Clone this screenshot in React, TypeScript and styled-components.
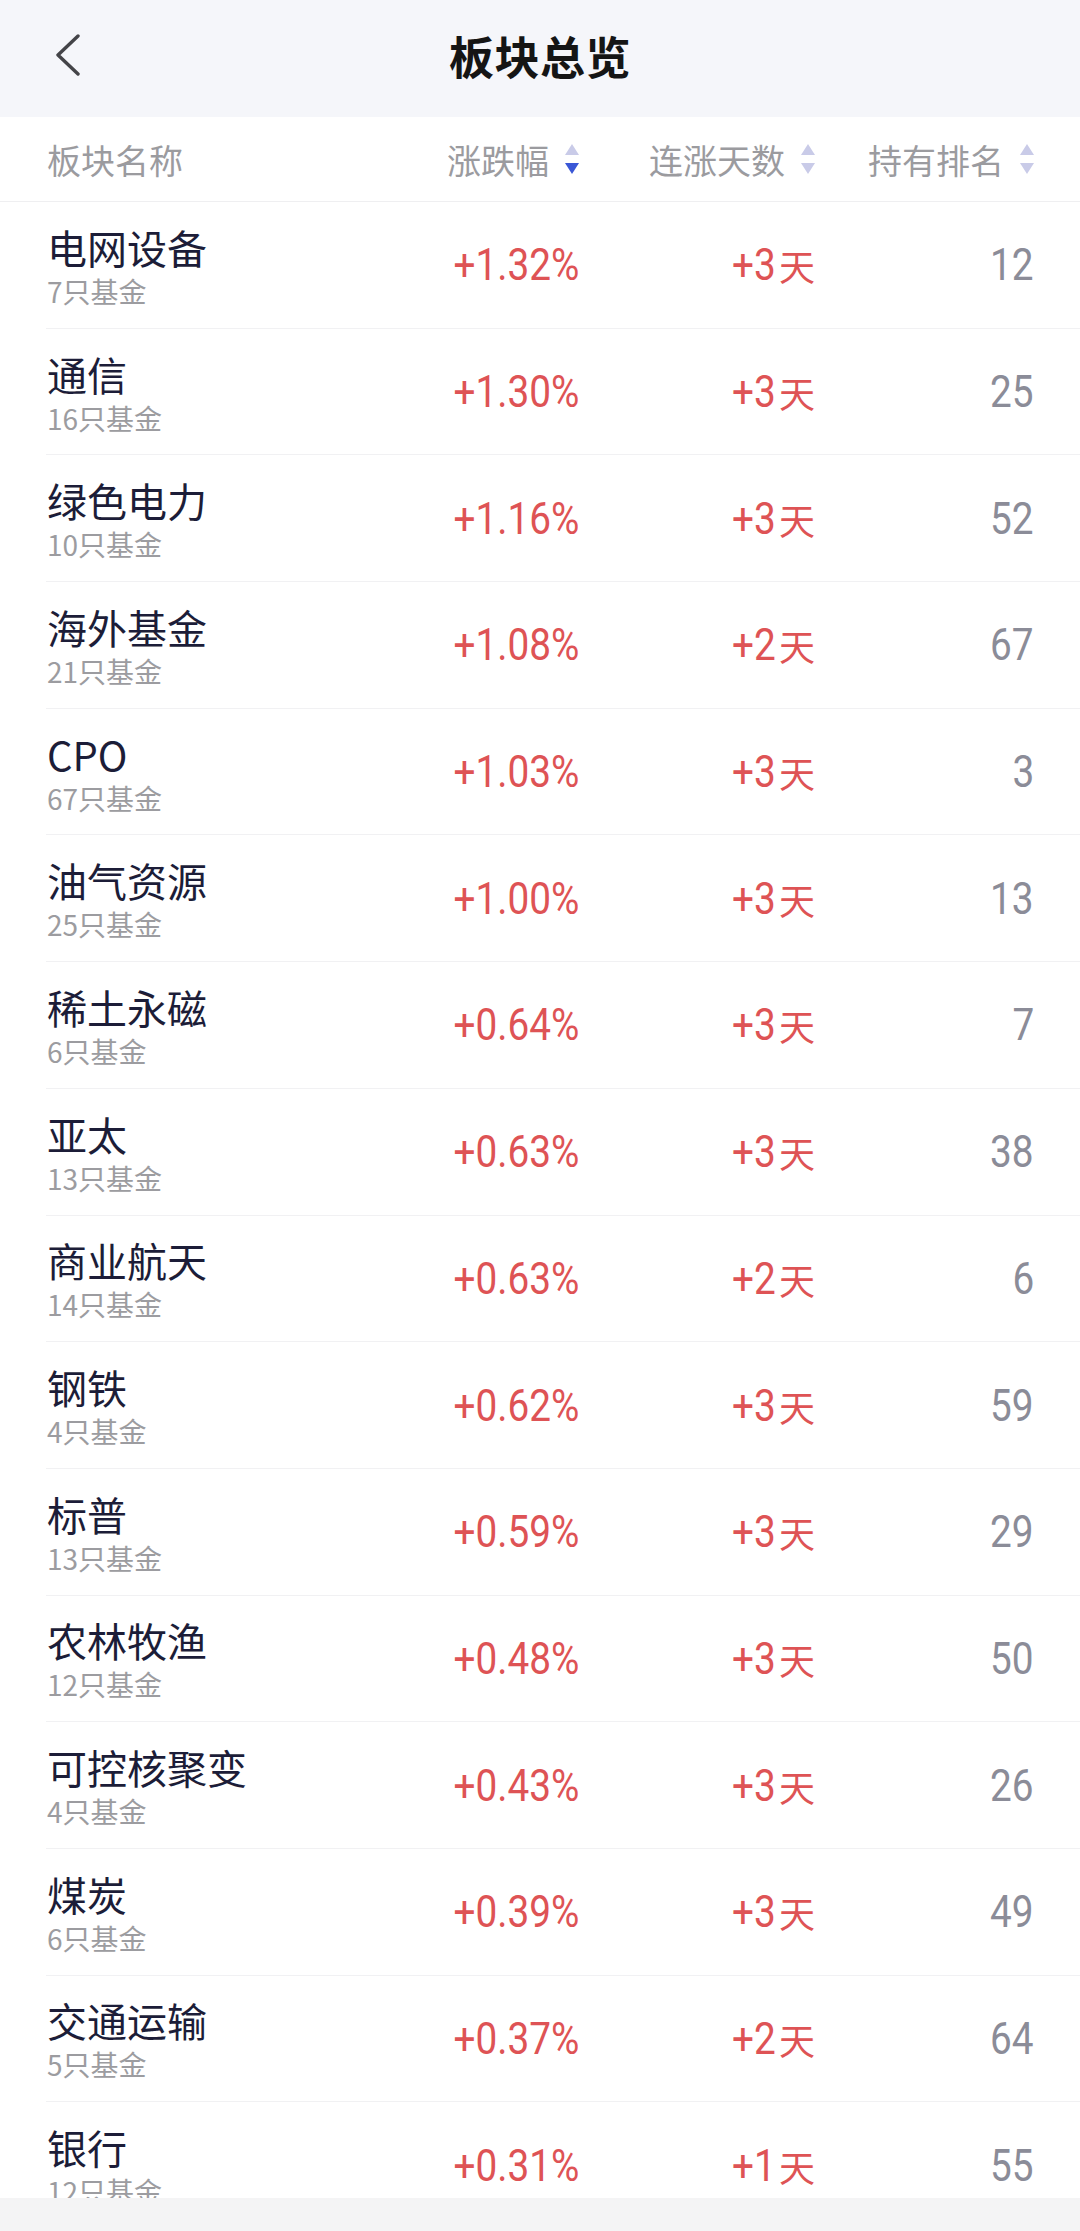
import React from "react";
import styled, { createGlobalStyle } from "styled-components";

const GlobalStyle = createGlobalStyle`
  html, body { margin: 0; padding: 0; background: #ffffff; }
  body { font-family: "Noto Sans CJK SC", "Noto Sans", sans-serif; }
  * { box-sizing: border-box; }
`;

const Page = styled.div`
  height: 100vh;
  display: flex;
  flex-direction: column;
  background: #ffffff;
  overflow: hidden;
`;

const TopBar = styled.header`
  flex: 0 0 117px;
  background: #f5f6fa;
  display: grid;
  grid-template-columns: 120px 1fr 120px;
  align-items: center;
  padding-bottom: 7px;
`;

const BackButton = styled.button`
  border: none;
  background: transparent;
  padding: 0 0 0 54px;
  display: flex;
  align-items: center;
  height: 60px;
  cursor: pointer;
`;

const Title = styled.h1`
  margin: 0;
  text-align: center;
  font-family: "Noto Sans CJK SC", sans-serif;
  font-size: 45px;
  font-weight: 700;
  color: #151515;
  letter-spacing: 0.5px;
`;

const Grid = styled.div`
  display: grid;
  grid-template-columns: 1fr 240px 236px 219px;
  align-items: center;
  padding: 0 46px 0 47px;
`;

const HeadRow = styled(Grid)`
  flex: 0 0 85px;
  border-bottom: 1px solid #efeff1;
`;

const HeadCell = styled.div<{ $right?: boolean }>`
  display: flex;
  align-items: center;
  justify-content: ${(p) => (p.$right ? "flex-end" : "flex-start")};
  gap: 16px;
  font-size: 34px;
  color: #9b9b9f;
  font-family: "Noto Sans CJK SC", sans-serif;
`;

const SortIcon = styled.span`
  display: inline-flex;
  flex-direction: column;
  gap: 8px;
  width: 14px;
`;

const Tri = styled.span<{ $down?: boolean; $active?: boolean }>`
  width: 0;
  height: 0;
  border-left: 7px solid transparent;
  border-right: 7px solid transparent;
  ${(p) =>
    p.$down
      ? `border-top: 11px solid ${p.$active ? "#3a57d6" : "#c9cbe8"};`
      : `border-bottom: 11px solid ${p.$active ? "#3a57d6" : "#c9cbe8"};`}
`;

const List = styled.div`
  flex: 1 1 auto;
  overflow: hidden;
`;

const Row = styled(Grid)`
  height: 126.7px;
  position: relative;
  &::after {
    content: "";
    position: absolute;
    left: 46px;
    right: 0;
    bottom: 0;
    height: 1px;
    background: #f1f1f3;
  }
`;

const NameCell = styled.div`
  display: flex;
  flex-direction: column;
  justify-content: center;
`;

const Name = styled.div`
  font-size: 40px;
  line-height: 48px;
  color: #1c1d38;
  font-family: "Noto Sans CJK SC", sans-serif;
  white-space: nowrap;
`;

const Sub = styled.div`
  margin-top: 3px;
  font-size: 28px;
  line-height: 34px;
  color: #9c9ca0;
  font-family: "Noto Sans CJK SC", sans-serif;
  white-space: nowrap;
`;

const Value = styled.div<{ $tone: "up" | "muted" }>`
  display: flex;
  justify-content: flex-end;
  align-items: center;
  color: ${(p) => (p.$tone === "up" ? "#de5355" : "#8b8c98")};
  white-space: nowrap;
`;

const Num = styled.span`
  display: inline-block;
  font-family: Roboto, "Liberation Sans", sans-serif;
  font-size: 45px;
  line-height: 48px;
  transform: scaleX(0.86);
  transform-origin: right center;
`;

const Unit = styled.span`
  font-family: "Noto Sans CJK SC", sans-serif;
  font-size: 36px;
  line-height: 48px;
  margin-left: 3px;
`;

const BottomBar = styled.div`
  flex: 0 0 33px;
  background: #f4f4f5;
`;

type Item = { name: string; count: number; change: string; days: number; rank: number };

const items: Item[] = [
  { name: "电网设备", count: 7, change: "+1.32%", days: 3, rank: 12 },
  { name: "通信", count: 16, change: "+1.30%", days: 3, rank: 25 },
  { name: "绿色电力", count: 10, change: "+1.16%", days: 3, rank: 52 },
  { name: "海外基金", count: 21, change: "+1.08%", days: 2, rank: 67 },
  { name: "CPO", count: 67, change: "+1.03%", days: 3, rank: 3 },
  { name: "油气资源", count: 25, change: "+1.00%", days: 3, rank: 13 },
  { name: "稀土永磁", count: 6, change: "+0.64%", days: 3, rank: 7 },
  { name: "亚太", count: 13, change: "+0.63%", days: 3, rank: 38 },
  { name: "商业航天", count: 14, change: "+0.63%", days: 2, rank: 6 },
  { name: "钢铁", count: 4, change: "+0.62%", days: 3, rank: 59 },
  { name: "标普", count: 13, change: "+0.59%", days: 3, rank: 29 },
  { name: "农林牧渔", count: 12, change: "+0.48%", days: 3, rank: 50 },
  { name: "可控核聚变", count: 4, change: "+0.43%", days: 3, rank: 26 },
  { name: "煤炭", count: 6, change: "+0.39%", days: 3, rank: 49 },
  { name: "交通运输", count: 5, change: "+0.37%", days: 2, rank: 64 },
  { name: "银行", count: 12, change: "+0.31%", days: 1, rank: 55 },
];

const Sort = ({ active }: { active?: "down" | "up" }) => (
  <SortIcon>
    <Tri $active={active === "up"} />
    <Tri $down $active={active === "down"} />
  </SortIcon>
);

export default function App() {
  return (
    <>
      <GlobalStyle />
      <Page>
        <TopBar>
          <BackButton aria-label="返回">
            <svg width="28" height="42" viewBox="0 0 28 42" fill="none">
              <path d="M24 2 L4 21 L24 40" stroke="#444448" strokeWidth="3.4" strokeLinecap="round" strokeLinejoin="round" />
            </svg>
          </BackButton>
          <Title>板块总览</Title>
          <div />
        </TopBar>
        <HeadRow>
          <HeadCell>板块名称</HeadCell>
          <HeadCell $right>
            涨跌幅
            <Sort active="down" />
          </HeadCell>
          <HeadCell $right>
            连涨天数
            <Sort />
          </HeadCell>
          <HeadCell $right>
            持有排名
            <Sort />
          </HeadCell>
        </HeadRow>
        <List>
          {items.map((it) => (
            <Row key={it.name}>
              <NameCell>
                <Name>{it.name}</Name>
                <Sub>{it.count}只基金</Sub>
              </NameCell>
              <Value $tone="up">
                <Num>{it.change}</Num>
              </Value>
              <Value $tone="up">
                <Num>+{it.days}</Num>
                <Unit>天</Unit>
              </Value>
              <Value $tone="muted">
                <Num>{it.rank}</Num>
              </Value>
            </Row>
          ))}
        </List>
        <BottomBar />
      </Page>
    </>
  );
}
